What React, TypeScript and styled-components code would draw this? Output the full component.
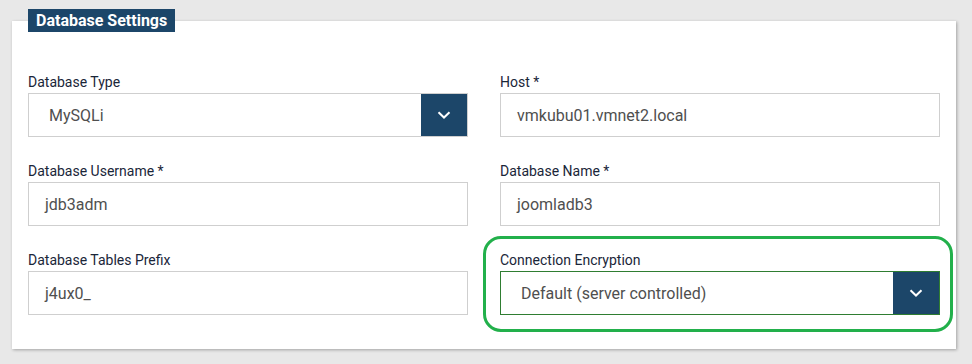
import * as React from "react";
import styled, { createGlobalStyle } from "styled-components";

const GlobalStyle = createGlobalStyle`
  body {
    margin: 0;
    background: #e8e8e8;
    font-family: Roboto, "Liberation Sans", sans-serif;
  }
`;

const Page = styled.div`
  width: 972px;
  height: 364px;
  padding: 9px 16px 0 12px;
  box-sizing: border-box;
  overflow: hidden;
`;

const Fieldset = styled.fieldset`
  position: relative;
  margin: 12px 0 0;
  padding: 51px 16px 34px;
  width: 944px;
  box-sizing: border-box;
  border: 0;
  background: #fff;
  box-shadow: 1px 1px 3px rgba(0, 0, 0, 0.3);
`;

const Legend = styled.div`
  position: absolute;
  top: -12px;
  left: 16px;
  height: 23px;
  padding: 0 8px;
  background: #1c4669;
  color: #fff;
  font-size: 16px;
  font-weight: 700;
  line-height: 24px;
`;

const Grid = styled.div`
  display: grid;
  grid-template-columns: 440px 440px;
  column-gap: 32px;
  row-gap: 24px;
`;

const Field = styled.div`
  position: relative;
  display: flex;
  flex-direction: column;
  gap: 1px;
`;

const Label = styled.label`
  font-size: 14px;
  line-height: 20px;
  color: #1a2639;
`;

const Input = styled.div<{ $accent?: boolean }>`
  display: flex;
  align-items: stretch;
  height: 44px;
  box-sizing: border-box;
  border: 1px solid ${(p) => (p.$accent ? "#2f7d32" : "#cfcfcf")};
  background: #fff;
`;

const Value = styled.span<{ $select?: boolean }>`
  flex: 1;
  display: flex;
  align-items: center;
  padding-left: ${(p) => (p.$select ? "20px" : "16px")};
  font-size: 16px;
  color: #4f4f4f;
`;

const Caret = styled.span`
  width: 46px;
  display: flex;
  align-items: center;
  justify-content: center;
  background: #1c4669;
`;

const Highlight = styled.div`
  position: absolute;
  left: -17px;
  right: -13px;
  top: -14px;
  bottom: -17px;
  border: 3px solid #22b04b;
  border-radius: 18px;
  pointer-events: none;
`;

const Chevron = () => (
  <svg width="14" height="8" viewBox="0 0 14 8">
    <path d="M1.5 1.2 7 6.5 12.5 1.2" fill="none" stroke="#fff" strokeWidth="2" />
  </svg>
);

const fields: { label: string; value: string; select?: boolean; accent?: boolean }[] = [
  { label: "Database Type", value: "MySQLi", select: true },
  { label: "Host *", value: "vmkubu01.vmnet2.local" },
  { label: "Database Username *", value: "jdb3adm" },
  { label: "Database Name *", value: "joomladb3" },
  { label: "Database Tables Prefix", value: "j4ux0_" },
  { label: "Connection Encryption", value: "Default (server controlled)", select: true, accent: true },
];

export default function App() {
  return (
    <Page>
      <GlobalStyle />
      <Fieldset>
        <Legend>Database Settings</Legend>
        <Grid>
          {fields.map((f) => (
            <Field key={f.label}>
              <Label>{f.label}</Label>
              <Input $accent={f.accent}>
                <Value $select={f.select}>{f.value}</Value>
                {f.select && (
                  <Caret>
                    <Chevron />
                  </Caret>
                )}
              </Input>
              {f.accent && <Highlight />}
            </Field>
          ))}
        </Grid>
      </Fieldset>
    </Page>
  );
}
